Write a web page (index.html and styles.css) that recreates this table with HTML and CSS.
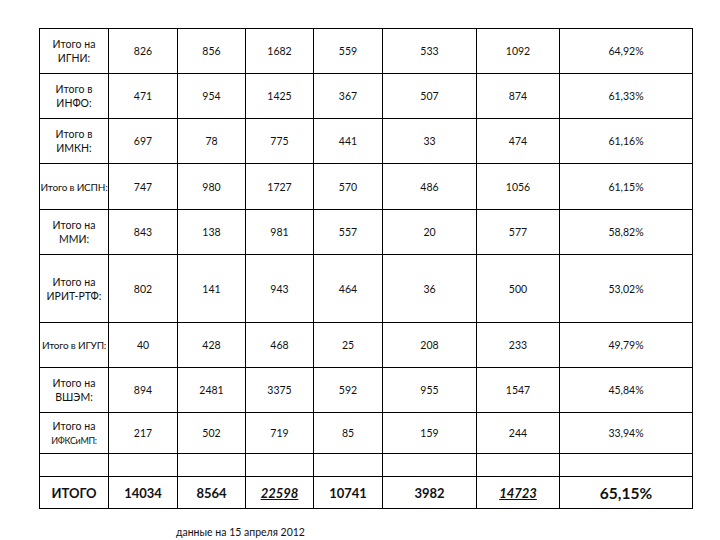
FILE: index.html
```html
<!DOCTYPE html>
<html lang="ru">
<head>
<meta charset="utf-8">
<link rel="stylesheet" href="styles.css">
</head>
<body>
<table class="report">
  <colgroup>
    <col class="c1"><col class="c2"><col class="c3"><col class="c4"><col class="c5"><col class="c6"><col class="c7"><col class="c8">
  </colgroup>
  <tr class="r45"><td class="lbl">Итого на<br>ИГНИ:</td><td>826</td><td>856</td><td>1682</td><td>559</td><td>533</td><td>1092</td><td>64,92%</td></tr>
  <tr class="r45"><td class="lbl">Итого в<br>ИНФО:</td><td>471</td><td>954</td><td>1425</td><td>367</td><td>507</td><td>874</td><td>61,33%</td></tr>
  <tr class="r45"><td class="lbl">Итого в<br>ИМКН:</td><td>697</td><td>78</td><td>775</td><td>441</td><td>33</td><td>474</td><td>61,16%</td></tr>
  <tr class="r46"><td class="lbl one">Итого в ИСПН:</td><td>747</td><td>980</td><td>1727</td><td>570</td><td>486</td><td>1056</td><td>61,15%</td></tr>
  <tr class="r45"><td class="lbl">Итого на<br>ММИ:</td><td>843</td><td>138</td><td>981</td><td>557</td><td>20</td><td>577</td><td>58,82%</td></tr>
  <tr class="r68"><td class="lbl">Итого на<br>ИРИТ-РТФ:</td><td>802</td><td>141</td><td>943</td><td>464</td><td>36</td><td>500</td><td>53,02%</td></tr>
  <tr class="r45"><td class="lbl one">Итого в ИГУП:</td><td>40</td><td>428</td><td>468</td><td>25</td><td>208</td><td>233</td><td>49,79%</td></tr>
  <tr class="r45"><td class="lbl">Итого на<br>ВШЭМ:</td><td>894</td><td>2481</td><td>3375</td><td>592</td><td>955</td><td>1547</td><td>45,84%</td></tr>
  <tr class="r41"><td class="lbl">Итого на<br><span class="small">ИФКСиМП:</span></td><td>217</td><td>502</td><td>719</td><td>85</td><td>159</td><td>244</td><td>33,94%</td></tr>
  <tr class="r23"><td></td><td></td><td></td><td></td><td></td><td></td><td></td><td></td></tr>
  <tr class="r32 total"><td>ИТОГО</td><td>14034</td><td>8564</td><td class="iu">22598</td><td>10741</td><td>3982</td><td class="iu">14723</td><td class="pct">65,15%</td></tr>
</table>
<p class="note">данные на 15 апреля 2012</p>
</body>
</html>
```

FILE: styles.css
```css
html, body {
  margin: 0;
  padding: 0;
  background: #fff;
}
body {
  font-family: Lato, "Open Sans", "Liberation Sans", sans-serif;
  color: #111;
  padding: 28px 0 0 39px;
}
.report {
  border-collapse: collapse;
  table-layout: fixed;
  width: 654px;
}
.report td {
  border: 1px solid #000;
  text-align: center;
  vertical-align: middle;
  font-size: 10.5px;
  line-height: 14px;
  padding: 0;
  overflow: hidden;
  white-space: nowrap;
}
.c1 { width: 69px; }
.c2 { width: 69px; }
.c3 { width: 68px; }
.c4 { width: 68px; }
.c5 { width: 69px; }
.c6 { width: 94px; }
.c7 { width: 83px; }
.c8 { width: 133px; }
.r45 { height: 45px; }
.r46 { height: 46px; }
.r68 { height: 68px; }
.r41 { height: 41px; }
.r23 { height: 23px; }
.r32 { height: 32px; }
.report td.one { font-size: 10px; letter-spacing: -0.2px; }
.small { font-size: 9px; letter-spacing: -0.3px; }
.total td {
  font-weight: 700;
  font-size: 13px;
}
.total td.iu {
  font-style: italic;
  text-decoration: underline;
}
.total td.pct {
  font-size: 15.5px;
}
.note {
  margin: 16px 0 0 137px;
  font-size: 10.5px;
  line-height: 14px;
}
```
